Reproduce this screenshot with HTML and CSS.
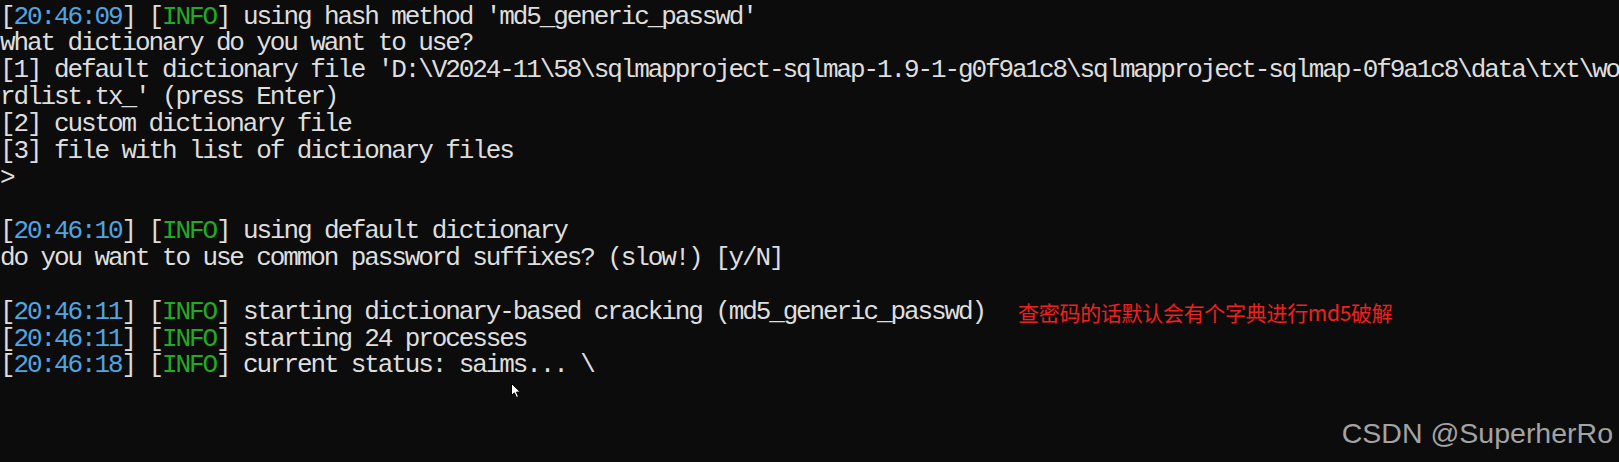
FILE: index.html
```html
<!DOCTYPE html>
<html lang="en">
<head>
<meta charset="utf-8">
<title>sqlmap</title>
<link rel="stylesheet" href="styles.css">
</head>
<body>
<div class="term">
  <div class="line"><span class="br">[</span><span class="ts">20:46:09</span><span class="br">]</span> <span class="br">[</span><span class="info">INFO</span><span class="br">]</span> using hash method 'md5_generic_passwd'</div>
  <div class="line">what dictionary do you want to use?</div>
  <div class="line">[1] default dictionary file 'D:\V2024-11\58\sqlmapproject-sqlmap-1.9-1-g0f9a1c8\sqlmapproject-sqlmap-0f9a1c8\data\txt\wo</div>
  <div class="line">rdlist.tx_' (press Enter)</div>
  <div class="line">[2] custom dictionary file</div>
  <div class="line">[3] file with list of dictionary files</div>
  <div class="line">&gt;</div>
  <div class="line"> </div>
  <div class="line"><span class="br">[</span><span class="ts">20:46:10</span><span class="br">]</span> <span class="br">[</span><span class="info">INFO</span><span class="br">]</span> using default dictionary</div>
  <div class="line">do you want to use common password suffixes? (slow!) [y/N]</div>
  <div class="line"> </div>
  <div class="line"><span class="br">[</span><span class="ts">20:46:11</span><span class="br">]</span> <span class="br">[</span><span class="info">INFO</span><span class="br">]</span> starting dictionary-based cracking (md5_generic_passwd)<span class="note">查密码的话默认会有个字典进行md5破解</span></div>
  <div class="line"><span class="br">[</span><span class="ts">20:46:11</span><span class="br">]</span> <span class="br">[</span><span class="info">INFO</span><span class="br">]</span> starting 24 processes</div>
  <div class="line"><span class="br">[</span><span class="ts">20:46:18</span><span class="br">]</span> <span class="br">[</span><span class="info">INFO</span><span class="br">]</span> current status: saims... \</div>
</div>
<svg class="cursor" width="12" height="16" viewBox="0 0 12 16" aria-hidden="true">
  <path d="M0.5 0.5 L0.5 12.5 L3.3 9.8 L5.5 14.5 L7.5 13.6 L5.4 9.1 L9.3 9.1 Z" fill="#ffffff" stroke="#000000" stroke-width="1"/>
</svg>
<div class="watermark">CSDN @SuperherRo</div>
</body>
</html>
```

FILE: styles.css
```css
html, body {
  margin: 0;
  padding: 0;
}
body {
  width: 1619px;
  height: 462px;
  overflow: hidden;
  background: #0c0c0c;
  position: relative;
}
.term {
  padding-top: 3.5px;
  font-family: "Liberation Mono", "DejaVu Sans Mono", monospace;
  font-size: 26px;
  letter-spacing: -2.11px;
  color: #dedede;
}
.line {
  height: 26.85px;
  line-height: 26.85px;
  white-space: pre;
}
.br {
  color: #dedede;
}
.ts {
  color: #4fa6e3;
}
.info {
  color: #23aa23;
}
.note {
  display: inline-block;
  margin-left: 33px;
  font-family: "Noto Sans CJK SC", "Noto Sans", sans-serif;
  font-size: 21px;
  letter-spacing: -0.3px;
  color: #f0201c;
  vertical-align: top;
}
.cursor {
  position: absolute;
  left: 511px;
  top: 383px;
}
.watermark {
  position: absolute;
  right: 6px;
  top: 416px;
  font-family: "Liberation Sans", Arial, sans-serif;
  font-size: 28.5px;
  line-height: 34px;
  color: #a3a3a3;
}
```
